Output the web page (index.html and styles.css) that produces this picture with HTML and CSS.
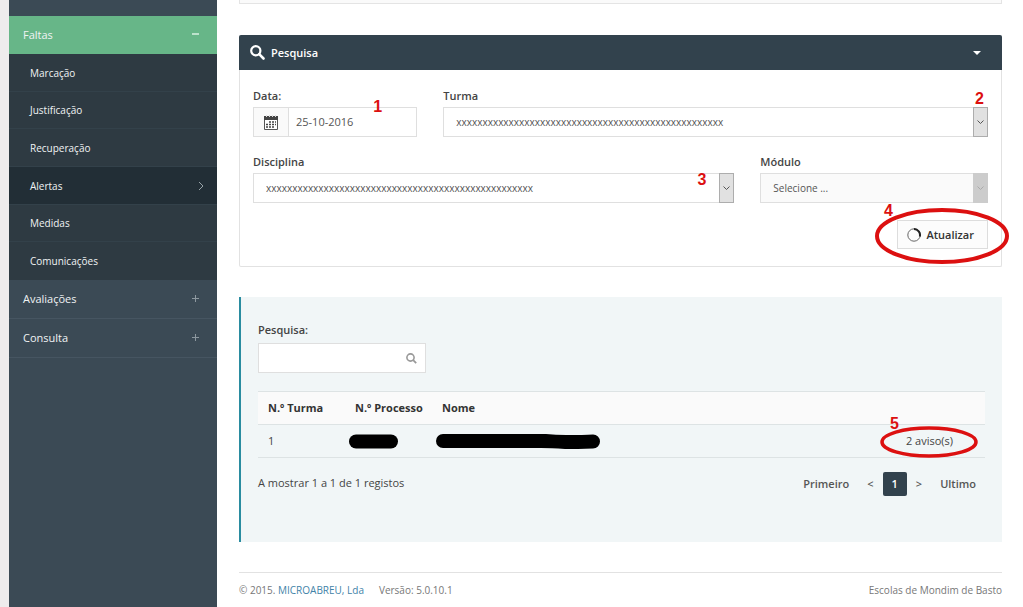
FILE: index.html
```html
<!DOCTYPE html>
<html lang="pt">
<head>
<meta charset="utf-8">
<title>Alertas de faltas</title>
<link rel="stylesheet" href="styles.css">
</head>
<body>
<div class="page">
  <nav class="sidebar" aria-label="Menu principal">
    <ul class="menu">
      <li><a class="menu-link open" href="#"><span>Faltas</span>
        <svg class="menu-icon" width="9" height="9" viewBox="0 0 9 9"><path d="M1 4h7" stroke="currentColor" stroke-width="1.500"/></svg></a>
        <ul class="submenu">
          <li><a class="sub-link" href="#">Marcação</a></li>
          <li><a class="sub-link" href="#">Justificação</a></li>
          <li><a class="sub-link" href="#">Recuperação</a></li>
          <li><a class="sub-link active" href="#">Alertas
            <svg width="6" height="10" viewBox="0 0 6 10"><path d="M1 1l4 4-4 4" fill="none" stroke="#98a3a8"/></svg></a></li>
          <li><a class="sub-link" href="#">Medidas</a></li>
          <li><a class="sub-link" href="#">Comunicações</a></li>
        </ul>
      </li>
      <li><a class="menu-link" href="#"><span>Avaliações</span>
        <svg class="menu-icon" width="9" height="9" viewBox="0 0 9 9"><path d="M1 4.500h7M4.500 1v7" stroke="currentColor"/></svg></a></li>
      <li><a class="menu-link" href="#"><span>Consulta</span>
        <svg class="menu-icon" width="9" height="9" viewBox="0 0 9 9"><path d="M1 4.500h7M4.500 1v7" stroke="currentColor"/></svg></a></li>
    </ul>
  </nav>

  <main class="content">
    <div class="panel-end"></div>

    <section class="panel">
      <header class="panel-head">
        <svg width="15" height="15" viewBox="0 0 15 15"><circle cx="5.800" cy="5.800" r="4.600" fill="none" stroke="#fff" stroke-width="2.200"/><path d="M9.200 9.200l4.300 4.300" stroke="#fff" stroke-width="2.600" stroke-linecap="round"/></svg>
        <h2>Pesquisa</h2>
        <svg class="caret" width="8" height="4" viewBox="0 0 8 4"><path d="M0 0h8L4 4z" fill="#fff"/></svg>
      </header>
      <form class="filters">
        <div class="field span-3">
          <label for="data">Data:</label>
          <div class="control">
            <span class="addon"><svg width="14" height="15" viewBox="0 0 14 15"><path d="M.5 2.500h13v12H.5z" fill="#fff" stroke="#555"/><path d="M0 1h14v4H0z" fill="#444"/><path d="M2 0h1v2H2zM5 0h1v2H5zM8 0h1v2H8zM11 0h1v2h-1z" fill="#ddd"/><path d="M5 7h7M2 9.500h10M2 12h8" stroke="#444" stroke-width="1.500" stroke-dasharray="2 1"/></svg></span>
            <input id="data" type="text" value="25-10-2016">
          </div>
          <b class="mark mark-1">1</b>
        </div>
        <div class="field span-9">
          <label for="turma">Turma</label>
          <div class="control">
            <select id="turma"><option>xxxxxxxxxxxxxxxxxxxxxxxxxxxxxxxxxxxxxxxxxxxxxxxxxxx</option></select>
            <span class="arrow"><svg width="7" height="5" viewBox="0 0 7 5"><path d="M.5.5l3 3 3-3" fill="none" stroke="currentColor"/></svg></span>
          </div>
          <b class="mark mark-2">2</b>
        </div>
        <div class="field span-8">
          <label for="disciplina">Disciplina</label>
          <div class="control">
            <select id="disciplina"><option>xxxxxxxxxxxxxxxxxxxxxxxxxxxxxxxxxxxxxxxxxxxxxxxxxxx</option></select>
            <span class="arrow"><svg width="7" height="5" viewBox="0 0 7 5"><path d="M.5.5l3 3 3-3" fill="none" stroke="currentColor"/></svg></span>
          </div>
          <b class="mark mark-3">3</b>
        </div>
        <div class="field span-4">
          <label for="modulo">Módulo</label>
          <div class="control off">
            <select id="modulo" disabled><option>Selecione ...</option></select>
            <span class="arrow"><svg width="7" height="5" viewBox="0 0 7 5"><path d="M.5.5l3 3 3-3" fill="none" stroke="currentColor"/></svg></span>
          </div>
        </div>
        <div class="actions">
          <button type="button" class="refresh">
            <svg width="14" height="14" viewBox="0 0 14 14" fill="none"><circle cx="7" cy="7" r="6.200" stroke="#666"/><path d="M7 1a6 6 0 0 1 5.800 7.500" stroke="#222" stroke-width="2"/></svg>
            Atualizar</button>
          <svg class="ring ring-4" width="134" height="56" viewBox="0 0 134 56"><ellipse cx="67" cy="28" rx="65" ry="26" fill="none" stroke="#dc1010" stroke-width="4"/></svg>
          <b class="mark mark-4">4</b>
        </div>
      </form>
    </section>

    <section class="results">
      <div class="search">
        <label for="procura">Pesquisa:</label>
        <div class="control">
          <input id="procura" type="text">
          <span class="glass"><svg width="11" height="11" viewBox="0 0 11 11"><circle cx="4.500" cy="4.500" r="3.600" fill="none" stroke="#999" stroke-width="1.600"/><path d="M7.200 7.200l3 3" stroke="#999" stroke-width="1.800"/></svg></span>
        </div>
      </div>
      <table class="grid">
        <thead><tr><th class="c-num">N.º Turma</th><th class="c-proc">N.º Processo</th><th>Nome</th><th class="c-warn"></th></tr></thead>
        <tbody><tr>
          <td>1</td>
          <td><svg class="redact" width="49" height="15" viewBox="0 0 49 15"><rect width="49" height="14" y=".5" rx="7"/></svg></td>
          <td><svg class="redact" width="164" height="15" viewBox="0 0 164 15"><path d="M7 0h103q10 1 20 1 18 0 27-.5a7 7 0 0 1 0 14q-16 .5-28 .5-14-1-24-1H7A7 7 0 0 1 7 0z"/></svg></td>
          <td class="c-warn"><span class="warn">2 aviso(s)
            <svg class="ring ring-5" width="98" height="32" viewBox="0 0 98 32"><ellipse cx="49" cy="16" rx="47" ry="14" fill="none" stroke="#dc1010" stroke-width="3.500"/></svg>
            <b class="mark mark-5">5</b></span></td>
        </tr></tbody>
      </table>
      <div class="table-foot">
        <p>A mostrar 1 a 1 de 1 registos</p>
        <nav class="pager" aria-label="Paginação">
          <a href="#">Primeiro</a><a href="#">&lt;</a><a class="current" href="#">1</a><a href="#">&gt;</a><a href="#">Ultimo</a>
        </nav>
      </div>
    </section>

    <footer class="footer">
      <span>© 2015. <a href="#">MICROABREU, Lda</a></span>
      <span>Versão: 5.0.10.1</span>
      <span class="school">Escolas de Mondim de Basto</span>
    </footer>
  </main>
</div>
</body>
</html>
```
FILE: styles.css
```css
* { box-sizing: border-box; }
body { margin: 0; background: #eeeced; color: #444; font: 11px/16px "Open Sans", sans-serif; }
ul { margin: 0; padding: 0; list-style: none; }
a { color: inherit; text-decoration: none; }
svg { display: block; flex: none; }
h2, p { margin: 0; }

.page { display: flex; min-height: 100vh; padding-left: 9px; }
.sidebar { flex: 0 0 208px; padding-top: 16px; background: #3b4a55; color: #f0f3f4; }
.menu-link { display: flex; align-items: center; justify-content: space-between; height: 39px; padding: 0 17px 0 14px; border-bottom: 1px solid #465561; }
.menu-link.open { height: 38px; border: 0; background: #67b688; }
.menu-icon { color: #8d989f; margin-bottom: 2px; }
.open .menu-icon { color: #d9f0e2; }
.submenu { background: #2e3a42; font-size: 10px; }
.sub-link { display: flex; align-items: center; justify-content: space-between; height: 38px; padding: 0 13px 0 21px; border-bottom: 1px solid #33414a; }
.submenu li:nth-child(3n + 2) .sub-link { height: 37px; }
.submenu li:last-child .sub-link { border: 0; }
.sub-link.active { background: #222e36; }

.content { flex: 1; min-width: 0; padding: 0 21px 0 22px; background: #fff; }
.panel-end { height: 4px; margin-bottom: 31px; border: 1px solid #e4e4e4; border-top: 0; background: #fafafa; }
.panel { border: 1px solid #e2e2e2; border-top: 0; border-radius: 2px; }
.panel-head { display: flex; align-items: center; gap: 6px; height: 35px; margin: 0 -1px; padding: 0 21px 0 11px; border-radius: 2px 2px 0 0; background: #32424d; color: #fff; }
.panel-head h2 { font-size: 11px; font-weight: 600; }
.caret { margin-left: auto; }

.filters { display: grid; grid-template-columns: repeat(12, minmax(0, 1fr)); gap: 17px 26px; padding: 18px 13px 17px; }
.field { position: relative; }
.span-3 { grid-column: span 3; }
.span-4 { grid-column: span 4; }
.span-8 { grid-column: span 8; }
.span-9 { grid-column: span 9; }
label { display: block; margin-bottom: 3px; font-weight: 600; }
.control { display: flex; height: 30px; border: 1px solid #dfdfdf; background: #fff; }
.addon { display: grid; place-items: center; width: 35px; border-right: 1px solid #dfdfdf; background: #fafafa; }
input, select { flex: 1; min-width: 0; border: 0; outline: 0; background: none; color: #555; font: inherit; appearance: none; }
input { padding: 0 7px; }
select { padding: 0 12px; font-size: 10px; opacity: 1; }
.arrow { display: grid; place-items: center; width: 15px; margin: -1px; border: 1px solid #adadad; background: #e1e1e1; color: #555; }
.off { background: #fafafa; }
.off .arrow { border-color: #ccc; background: #ccc; color: #aaa; }
.actions { position: relative; grid-column: 1 / -1; display: flex; justify-content: flex-end; }
.refresh { display: flex; align-items: center; gap: 5px; height: 29px; padding: 0 13px 0 9px; border: 1px solid #ddd; background: #fcfcfc; color: #333; font: inherit; font-weight: 600; }

.mark { position: absolute; color: #dc1010; font: bold 16px/16px "Liberation Sans", sans-serif; }
.ring { position: absolute; pointer-events: none; }
.mark-1 { top: 11px; right: 35px; }
.mark-2 { top: 3px; right: 4px; }
.mark-3 { top: 18px; right: 28px; }
.mark-4 { top: -17px; right: 95px; }
.ring-4 { top: -12px; right: -21px; }

.results { margin-top: 30px; padding: 25px 17px 46px; border-left: 2px solid #2a8ca0; background: #f1f6f7; }
.search { width: 168px; margin-bottom: 18px; }
.search label { margin-bottom: 5px; }
.glass { display: grid; place-items: center; width: 28px; }
.grid { width: 100%; border-collapse: collapse; table-layout: fixed; }
.grid tr { border-top: 1px solid #dde3e4; border-bottom: 1px solid #dde3e4; }
.grid thead tr { background: #fafafa; }
th, td { height: 33px; padding: 0 10px; text-align: left; }
.c-num, .c-proc { width: 87px; }
th { color: #333; font-weight: 700; white-space: nowrap; }
.grid .c-warn { width: 110px; padding: 0 32px 0 0; text-align: right; }
.redact { margin-left: -6px; }
.warn { position: relative; }
.ring-5 { top: -7px; right: -25px; }
.mark-5 { top: -17px; right: 54px; }
.table-foot { display: flex; justify-content: space-between; padding-top: 14px; }
.table-foot p { padding-top: 3px; }
.pager { display: flex; font-weight: 600; color: #555; }
.pager a { height: 24px; padding: 0 9px; line-height: 24px; }
.pager .current { border-radius: 2px; background: #32424d; color: #fff; }

.footer { display: flex; gap: 15px; margin-top: 30px; padding: 9px 0 8px; border-top: 1px solid #e2e2e2; color: #777; font-size: 10px; }
.footer a { color: #3f83a8; }
.school { margin-left: auto; }
```
